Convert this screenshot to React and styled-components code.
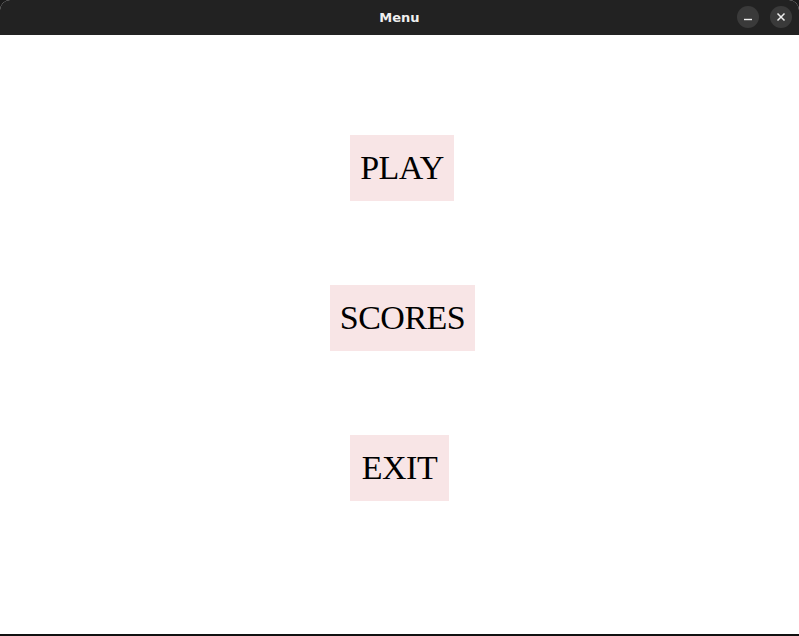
import React from 'react';
import styled, { createGlobalStyle } from 'styled-components';

const GlobalStyle = createGlobalStyle`
    html, body {
        margin: 0;
        padding: 0;
        background: #1b1b1b;
    }
`;

const Window = styled.div`
    width: 799px;
    height: 636px;
    display: flex;
    flex-direction: column;
    background: #ffffff;
    border-radius: 10px 10px 0 0;
    overflow: hidden;
    border-bottom: 2px solid #111111;
    box-sizing: border-box;
`;

const TitleBar = styled.div`
    height: 35px;
    flex-shrink: 0;
    background: #222222;
    display: flex;
    align-items: center;
    justify-content: center;
    position: relative;
`;

const Title = styled.span`
    font-family: "DejaVu Sans", sans-serif;
    font-weight: 700;
    font-size: 13px;
    color: #f0f0f0;
`;

const Controls = styled.div`
    position: absolute;
    right: 7px;
    top: 6px;
    display: flex;
    gap: 11px;
`;

const ControlButton = styled.div`
    width: 22px;
    height: 22px;
    border-radius: 50%;
    background: #3a3a3a;
    display: flex;
    align-items: center;
    justify-content: center;
`;

const Content = styled.div`
    flex: 1;
    display: flex;
    flex-direction: column;
    align-items: center;
    padding-top: 100px;
    gap: 84px;
`;

const MenuButton = styled.div`
    width: ${props => props.$width}px;
    height: 66px;
    box-sizing: border-box;
    background: #f8e5e6;
    display: flex;
    align-items: center;
    justify-content: center;
    font-family: "Liberation Serif", serif;
    font-size: 34px;
    letter-spacing: -0.5px;
    color: #000000;
    margin-left: ${props => props.$shift || 0}px;
`;

const App = () => {
    return (
        <>
            <GlobalStyle />
            <Window>
                <TitleBar>
                    <Title>Menu</Title>
                    <Controls>
                        <ControlButton>
                            <svg width="10" height="10" viewBox="0 0 10 10">
                                <line x1="1" y1="7.5" x2="9" y2="7.5" stroke="#eeeeee" strokeWidth="1.4" />
                            </svg>
                        </ControlButton>
                        <ControlButton>
                            <svg width="10" height="10" viewBox="0 0 10 10">
                                <path d="M1.5 1.5 L8.5 8.5 M8.5 1.5 L1.5 8.5" stroke="#eeeeee" strokeWidth="1.5" />
                            </svg>
                        </ControlButton>
                    </Controls>
                </TitleBar>
                <Content>
                    <MenuButton $width={104} $shift={5}>PLAY</MenuButton>
                    <MenuButton $width={145} $shift={6}>SCORES</MenuButton>
                    <MenuButton $width={99}>EXIT</MenuButton>
                </Content>
            </Window>
        </>
    );
};

export default App;
